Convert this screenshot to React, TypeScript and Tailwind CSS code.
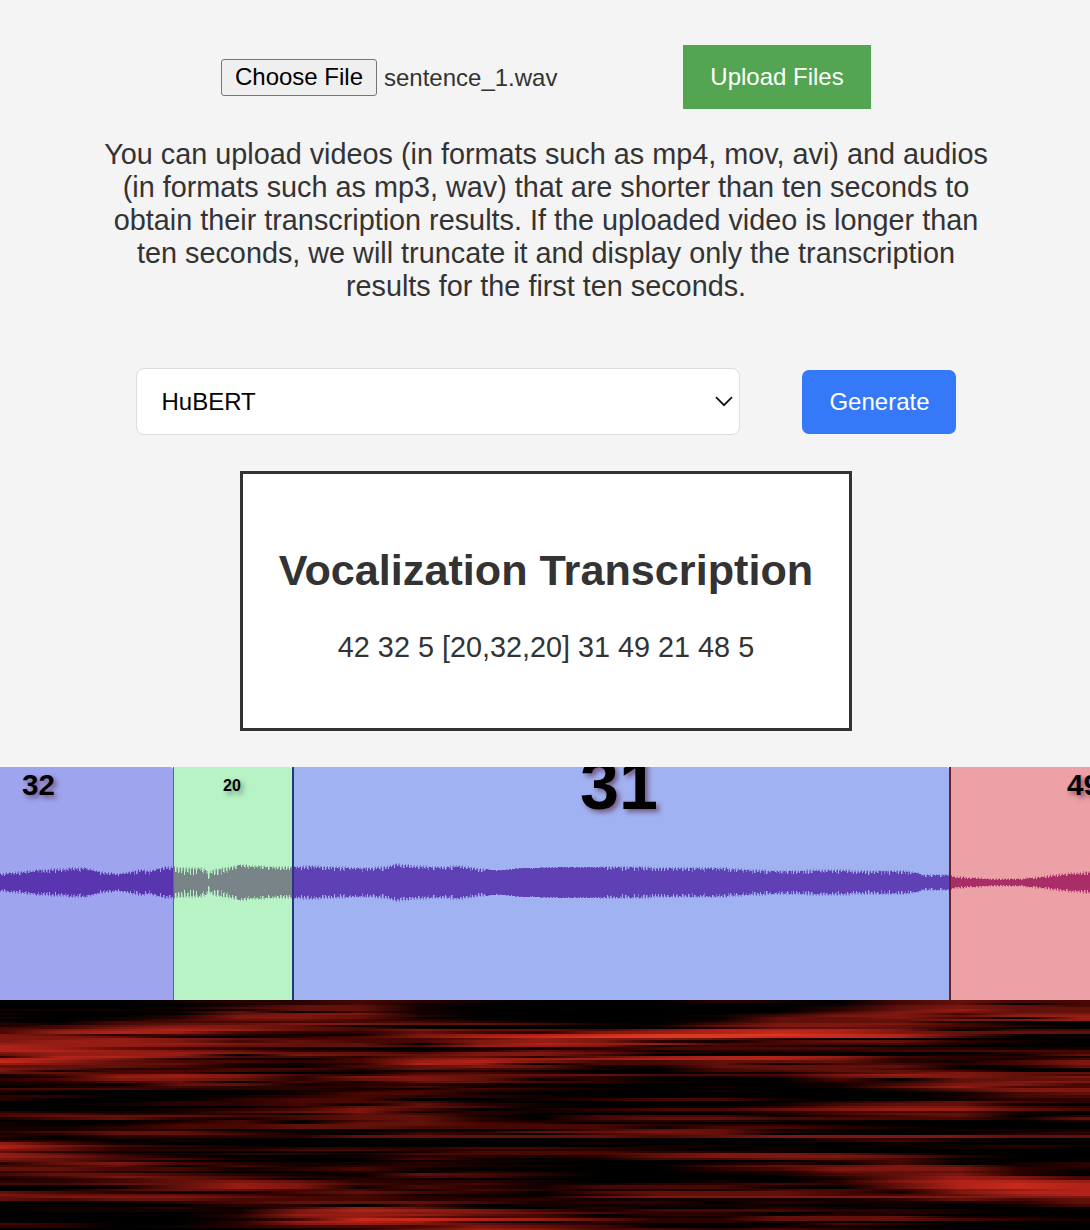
import { useId } from 'react';

// Each row: height in px, then intensity digits sampled every 60px.
const SPECTRUM = `
3 0001223210002103433
2 0000123100000003403
2 0000244100000014543
2 0001344100000024544
2 1110144100000024644
2 0001403100000035544
2 1000455100000245355
2 0002554200001355466
2 1012554100000445306
2 0013443210001444556
2 1033333321002444100
2 2134455443103555310
2 1345540000014554320
2 3356543100002444200
2 3567643544357775033
3 3676322432567875444
2 5423211567899987410
2 5541023578999887301
2 5565433346554200000
3 5665343356521344210
2 6666544057663333100
2 7665444366513210000
3 7643210011233332211
2 7765422024312223333
2 5666544355421110023
2 4666054455300100114
2 2775332442467763221
2 7752103566677752213
3 8643323675334442135
2 6544112760334133235
3 4443103454114444014
2 5422332433103443101
2 5133321121003344300
2 4433000332001134544
2 1356532444433356543
2 1266525543211245545
3 2355424541200030444
2 1234031443210022455
3 1104412210000013553
2 0123222311001014633
2 3332221132100002455
2 2100012321001001355
3 1000013310000000134
3 2200123221000000133
3 2000233001233100122
2 0002233310000023432
3 0012230421000134410
2 0000024430000245532
3 0001235301233456643
2 2111345121111233310
2 3322204320000134410
2 3444334410333123402
3 1342134420344333314
2 0001303421222110002
2 1002304432010000000
2 1013344433322210000
3 1123344333313321000
2 1122000001344100111
2 2344211224454210012
2 1244310320344010122
3 2022224444434555544
2 1011000100100022100
2 2201000000000023100
3 6310000000100001000
2 7532100000011000121
2 7421122233210100110
2 5422233222210100000
2 4210000133322100000
2 6421221333345542000
3 6531001221245554200
2 5433100310133443000
2 4421000111000023100
3 2453211210001213012
2 3340312211003445412
4 4433123100002355521
2 2321002021001144420
3 3443210432000134520
2 2354321331000024653
2 1234302100000014653
3 2234542221001025776
2 3344653231122324787
4 0014651321333104787
2 0134433132121332567
3 4321134320344431577
2 5444323110244433467
2 4555433211455555555
3 4344333222111112434
3 0002344431220211124
3 0000220301111101013
2 0112036410200210000
3 0111157653133322100
2 0000156554322012100
2 0000266643022021000
2 0000256433111444110
3 0000138876422444321
2 1000267620222110000
2 3200256543200032000
3 2201233354300110000
2 0000012465332321000`
  .trim()
  .split('\n')
  .map((line) => {
    const [h, digits] = line.split(' ');
    return { h: Number(h), levels: digits.split('').map(Number) };
  });

const HEAT = ['#000000', '#120100', '#2a0200', '#470703', '#62100a', '#7d170f', '#971d14', '#b12218', '#c8291c', '#db3821'];

// Sum of the row heights; the canvas scales it to its own height.
const TOTAL = SPECTRUM.reduce((sum, row) => sum + row.h, 0);

const ENVELOPE: [number, number][] = [
  [0, 8], [20, 10], [40, 12], [60, 13], [75, 14], [85, 14], [100, 10], [118, 8], [140, 12], [150, 11], [165, 15],
  [173, 15], [180, 14], [200, 14], [206, 12], [208, 7], [211, 12], [225, 14], [240, 17], [255, 16], [275, 15], [292, 15],
  [310, 16], [330, 15], [365, 14], [385, 15], [396, 18], [415, 16], [440, 15], [460, 16], [480, 13], [500, 12],
  [520, 14], [560, 15], [600, 15], [620, 15], [680, 14], [720, 14], [750, 12], [780, 11], [830, 12], [870, 11],
  [905, 11], [918, 9], [921, 7], [948, 7], [955, 5], [975, 4], [990, 3], [1020, 3], [1040, 5], [1060, 8], [1090, 10],
];

function amplitude(x: number) {
  const i = Math.max(1, ENVELOPE.findIndex(([px]) => px >= x));
  const [x0, a0] = ENVELOPE[i - 1];
  const [x1, a1] = ENVELOPE[i];
  return a0 + ((a1 - a0) * (x - x0)) / (x1 - x0);
}

function noise(n: number) {
  const v = Math.sin(n * 127.1) * 43758.5453;
  return v - Math.floor(v);
}

function Wave({ from, width, fill }: { from: number; width: number; fill: string }) {
  let core = '';
  let fringe = '';
  for (let i = 0; i < width; i++) {
    const x = from + i;
    const peak = amplitude(x);
    const smooth = x > 485 && x < 600;
    const rough = x > 174 && x < 230 ? 7 : smooth ? 1 : Math.min(3.8, peak * 0.35);
    const c = Math.max(2, Math.round(peak - rough * noise(x) * (x % 3 === 0 ? 0.3 : 1)));
    const f = Math.max(c, Math.round(peak + (x % 3 === 0 && !smooth ? 1 : 0)));
    core += `M${i} ${115 - c}h1v${c * 2 + 1}h-1z`;
    if (x % 3 !== 1) fringe += `M${i} ${115 - f}h1v${f * 2 + 1}h-1z`;
  }
  return (
    <svg className="block h-[233px]" width={width} height={233} shapeRendering="crispEdges">
      <path d={fringe} fill={fill} opacity={0.45} />
      <path d={core} fill={fill} />
    </svg>
  );
}

function Spectrogram() {
  const id = useId();
  let y = 0;
  return (
    <svg
      className="block h-[230px] w-[1090px] bg-black"
      viewBox={`0 0 1090 ${TOTAL}`}
      preserveAspectRatio="none"
      shapeRendering="crispEdges"
    >
      {SPECTRUM.map((row, i) => {
        const top = y;
        y += row.h;
        return (
          <g key={i}>
            <linearGradient id={`${id}${i}`} gradientUnits="userSpaceOnUse" x1="0" y1="0" x2="1080" y2="0">
              {row.levels.map((level, k) => (
                <stop key={k} offset={k / 18} stopColor={HEAT[level]} />
              ))}
            </linearGradient>
            <rect x="0" y={top} width="1090" height={row.h} fill={`url(#${id}${i})`} />
          </g>
        );
      })}
    </svg>
  );
}

const SHADOW = '[text-shadow:3px_3px_5px_rgba(90,30,60,0.6)]';

export default function App() {
  return (
    <div className="h-[1230px] w-[1090px] overflow-hidden bg-[#f4f4f4] font-['Liberation_Sans',Arial,sans-serif] text-[#333]">
      <div className="flex h-[767px] w-[1092px] flex-col items-center pt-[45px]">
        <div className="flex h-16 w-[650px] items-center justify-between">
          <div className="flex items-center gap-[7px] text-2xl">
            <button className="h-[37px] w-[156px] rounded-[3px] border border-[#767676] bg-[#efefef] pb-px leading-[34px] text-black">Choose File</button>
            <span className="pt-px">sentence_1.wav</span>
          </div>
          <button className="h-16 w-[188px] bg-[#54a551] text-2xl text-white">Upload Files</button>
        </div>
        <p className="mt-[29px] text-center text-[28.8px] leading-[33px] whitespace-nowrap">
          You can upload videos (in formats such as mp4, mov, avi) and audios
          <br />
          (in formats such as mp3, wav) that are shorter than ten seconds to
          <br />
          obtain their transcription results. If the uploaded video is longer than
          <br />
          ten seconds, we will truncate it and display only the transcription
          <br />
          results for the first ten seconds.
        </p>
        <div className="mt-[65px] flex w-[820px] items-center justify-between">
          <div className="flex h-[67px] w-[604px] items-center justify-between rounded-lg border border-[#ddd] bg-white pr-[6px] pl-[24.5px] text-2xl text-black">
            <span>HuBERT</span>
            <svg className="h-[11px] w-[18px]" viewBox="0 0 18 11" fill="none" stroke="#111" strokeWidth="1.8">
              <path d="M1 1.2 9 9.2 17 1.2" />
            </svg>
          </div>
          <button className="mt-px h-16 w-[154px] rounded-[7px] bg-[#3579f8] pl-px text-2xl text-white">Generate</button>
        </div>
        <div className="mt-9 h-[260px] w-[612px] border-[3px] border-[#333] bg-white text-center whitespace-nowrap">
          <h1 className="mt-[71px] text-[43.2px] leading-[50px] font-bold">Vocalization Transcription</h1>
          <p className="mt-[35px] text-[28.8px] leading-[34px]">42 32 5 [20,32,20] 31 49 21 48 5</p>
        </div>
      </div>

      <div className="flex h-[233px] w-[1090px] overflow-hidden font-bold text-black">
        <section className="relative w-[173px] shrink-0 rounded-tr-[3px] bg-[#9ea5ee]">
          <Wave from={0} width={173} fill="#5a35b0" />
          <span className={`absolute top-0 left-[22px] text-[29.5px] leading-[35px] ${SHADOW}`}>32</span>
        </section>
        <section className="relative w-[119px] shrink-0 rounded-tr-[3px] border-l border-[#3f7a5c] bg-[#b8f3c6]">
          <Wave from={174} width={118} fill="#798488" />
          <span className="absolute top-[9px] left-[49px] text-[16px] leading-[19px] [text-shadow:3px_3px_5px_rgba(50,60,50,0.5)]">20</span>
        </section>
        <section className="relative w-[657px] shrink-0 rounded-tr-[3px] border-l-2 border-[#233a78] bg-[#a0b2f1]">
          <Wave from={294} width={655} fill="#5f41b5" />
          <div className="absolute inset-0 overflow-hidden">
            <span className={`absolute top-[-22px] left-[286px] text-[70px] leading-[80px] ${SHADOW}`}>31</span>
          </div>
        </section>
        <section className="relative w-[141px] shrink-0 overflow-hidden border-l-2 border-[#6b2029] bg-[#eba1a5]">
          <Wave from={951} width={139} fill="#a92d67" />
          <span className={`absolute top-0 left-[116px] text-[29.5px] leading-[35px] ${SHADOW}`}>49</span>
        </section>
      </div>
      <Spectrogram />
    </div>
  );
}
